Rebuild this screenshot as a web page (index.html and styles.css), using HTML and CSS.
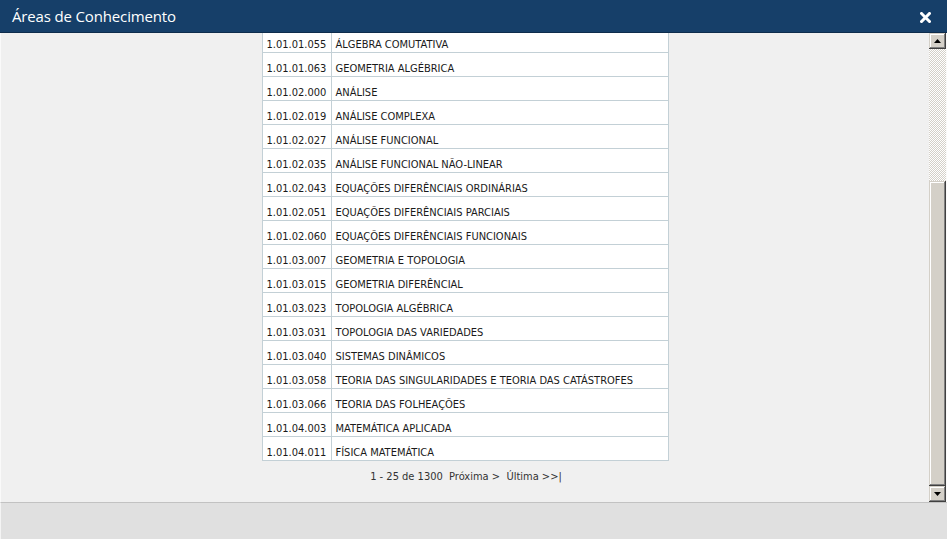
FILE: index.html
```html
<!DOCTYPE html>
<html lang="pt">
<head>
<meta charset="utf-8">
<title>Áreas de Conhecimento</title>
<link rel="stylesheet" href="styles.css">
</head>
<body>
<div class="window">
  <div class="titlebar">
    <span class="title">Áreas de Conhecimento</span>
    <span class="close" aria-label="Fechar">
      <svg width="11" height="11" viewBox="0 0 11 11"><path d="M1.5 1.5 L9.5 9.5 M9.5 1.5 L1.5 9.5" stroke="#fff" stroke-width="3" stroke-linecap="square" fill="none"/></svg>
    </span>
  </div>
  <div class="main">
    <div class="content">
      <div class="grid">
        <div class="row"><div class="code">1.01.01.055</div><div class="name">ÁLGEBRA COMUTATIVA</div></div>
        <div class="row"><div class="code">1.01.01.063</div><div class="name">GEOMETRIA ALGÉBRICA</div></div>
        <div class="row"><div class="code">1.01.02.000</div><div class="name">ANÁLISE</div></div>
        <div class="row"><div class="code">1.01.02.019</div><div class="name">ANÁLISE COMPLEXA</div></div>
        <div class="row"><div class="code">1.01.02.027</div><div class="name">ANÁLISE FUNCIONAL</div></div>
        <div class="row"><div class="code">1.01.02.035</div><div class="name">ANÁLISE FUNCIONAL NÃO-LINEAR</div></div>
        <div class="row"><div class="code">1.01.02.043</div><div class="name">EQUAÇÕES DIFERÊNCIAIS ORDINÁRIAS</div></div>
        <div class="row"><div class="code">1.01.02.051</div><div class="name">EQUAÇÕES DIFERÊNCIAIS PARCIAIS</div></div>
        <div class="row"><div class="code">1.01.02.060</div><div class="name">EQUAÇÕES DIFERÊNCIAIS FUNCIONAIS</div></div>
        <div class="row"><div class="code">1.01.03.007</div><div class="name">GEOMETRIA E TOPOLOGIA</div></div>
        <div class="row"><div class="code">1.01.03.015</div><div class="name">GEOMETRIA DIFERÊNCIAL</div></div>
        <div class="row"><div class="code">1.01.03.023</div><div class="name">TOPOLOGIA ALGÉBRICA</div></div>
        <div class="row"><div class="code">1.01.03.031</div><div class="name">TOPOLOGIA DAS VARIEDADES</div></div>
        <div class="row"><div class="code">1.01.03.040</div><div class="name">SISTEMAS DINÂMICOS</div></div>
        <div class="row"><div class="code">1.01.03.058</div><div class="name">TEORIA DAS SINGULARIDADES E TEORIA DAS CATÁSTROFES</div></div>
        <div class="row"><div class="code">1.01.03.066</div><div class="name">TEORIA DAS FOLHEAÇÕES</div></div>
        <div class="row"><div class="code">1.01.04.003</div><div class="name">MATEMÁTICA APLICADA</div></div>
        <div class="row"><div class="code">1.01.04.011</div><div class="name">FÍSICA MATEMÁTICA</div></div>
      </div>
      <div class="pager">1 - 25 de 1300&nbsp; Próxima &gt;&nbsp; Última &gt;&gt;|</div>
    </div>
    <div class="scrollbar">
      <div class="sbtn"><svg width="7" height="4" viewBox="0 0 7 4"><path d="M3.5 0 L7 4 L0 4 Z" fill="#000"/></svg></div>
      <div class="track track-top"></div>
      <div class="thumb"></div>
      <div class="sbtn"><svg width="7" height="4" viewBox="0 0 7 4"><path d="M0 0 L7 0 L3.5 4 Z" fill="#000"/></svg></div>
    </div>
  </div>
  <div class="footer"></div>
</div>
</body>
</html>
```
FILE: styles.css
```css
* { box-sizing: border-box; }
html, body { margin: 0; padding: 0; }
body {
  width: 947px;
  height: 539px;
  overflow: hidden;
  background: #f0f0f0;
}
.window {
  width: 947px;
  height: 539px;
  display: flex;
  flex-direction: column;
}
.titlebar {
  height: 33px;
  flex: none;
  background: #163f69;
  border-bottom: 1px solid #0e2c4c;
  display: flex;
  align-items: center;
  justify-content: space-between;
  padding: 0 16px 0 12px;
}
.title {
  font-family: "Open Sans", "Noto Sans", sans-serif;
  font-size: 15px;
  color: #ffffff;
  letter-spacing: -0.15px;
  line-height: 20px;
  margin-top: 0;
}
.close {
  display: flex;
  width: 11px;
  height: 11px;
  margin-top: 2px;
}
.main {
  height: 469px;
  flex: none;
  display: flex;
  border-left: 1px solid #fafafa;
  border-right: 1px solid #fafafa;
}
.content {
  flex: 1;
  overflow: hidden;
  background: #f0f0f0;
  display: flex;
  flex-direction: column;
  align-items: center;
}
.grid {
  width: 407px;
  margin-top: -5px;
  background: #ffffff;
  border: 1px solid #c3d0d6;
  border-bottom: none;
  font-family: "DejaVu Sans Condensed", "DejaVu Sans", sans-serif;
  font-stretch: semi-condensed;
  font-size: 11px;
  color: #1a1a1a;
}
.row {
  display: flex;
  height: 24px;
  border-bottom: 1px solid #c3d0d6;
}
.code {
  width: 69px;
  flex: none;
  border-right: 1px solid #c3d0d6;
  padding: 9px 0 0 4px;
  line-height: 13px;
  white-space: nowrap;
}
.name {
  flex: 1;
  padding: 9px 0 0 4px;
  line-height: 13px;
  white-space: nowrap;
}
.pager {
  margin-top: 9px;
  padding-left: 2px;
  font-family: "DejaVu Sans Condensed", "DejaVu Sans", sans-serif;
  font-stretch: semi-condensed;
  font-size: 11px;
  line-height: 13px;
  color: #333333;
}
.scrollbar {
  width: 17px;
  flex: none;
  display: flex;
  flex-direction: column;
}
.sbtn {
  height: 16px;
  flex: none;
  background: #d4d0c8;
  box-shadow: inset -1px -1px 0 #404040, inset 1px 1px 0 #d4d0c8, inset -2px -2px 0 #808080, inset 2px 2px 0 #ffffff;
  display: flex;
  align-items: center;
  justify-content: center;
}
.track {
  background: repeating-conic-gradient(#d4d0c8 0 25%, #ffffff 0 50%) 0 0 / 2px 2px;
}
.track-top {
  height: 132px;
  flex: none;
}
.thumb {
  flex: 1;
  background: #d4d0c8;
  box-shadow: inset -1px -1px 0 #404040, inset 1px 1px 0 #d4d0c8, inset -2px -2px 0 #808080, inset 2px 2px 0 #ffffff;
}
.footer {
  flex: 1;
  background: #e0e0e0;
  border-top: 1px solid #c2c2c2;
  border-left: 1px solid #f4f4f4;
}
```
